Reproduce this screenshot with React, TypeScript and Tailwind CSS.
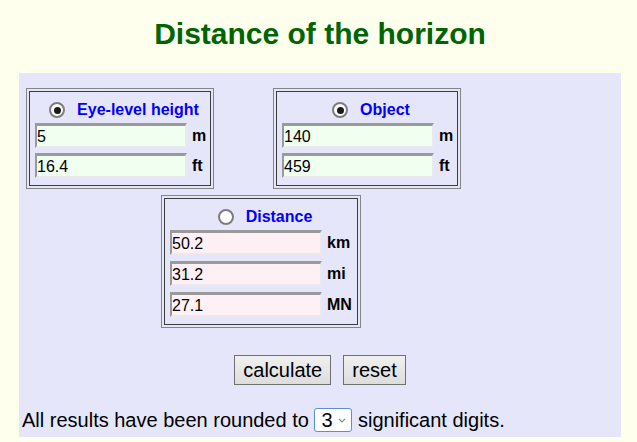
import React from "react";

const font = { fontFamily: '"Liberation Sans", Arial, sans-serif' };

function Radio({ checked }: { checked: boolean }) {
  return (
    <span className="ml-[8px] inline-flex h-[16px] w-[16px] shrink-0 items-center justify-center rounded-full border-2 border-[#7d7d7d] bg-white">
      {checked ? <span className="h-[7px] w-[7px] rounded-full bg-[#1a1a1a]" /> : null}
    </span>
  );
}

function Field({ value, unit, bg }: { value: string; unit: string; bg: string }) {
  return (
    <div className="flex items-center gap-[5px]">
      <input
        readOnly
        value={value}
        className={`h-[25px] w-[152px] border-t-[3px] border-l-[2px] border-r-[2px] border-b-[2px] border-t-[#9a9a9a] border-l-[#9a9a9a] border-r-[#e9e9ee] border-b-[#e9e9ee] pl-[0px] pt-[1px] text-[16px] leading-[18px] text-black outline-none ${bg}`}
        style={font}
      />
      <span className="text-[16px] font-bold text-black">{unit}</span>
    </div>
  );
}

function Box({
  width,
  label,
  checked,
  gap,
  fields,
  bg,
}: {
  width: string;
  label: string;
  checked: boolean;
  gap: string;
  fields: [string, string][];
  bg: string;
}) {
  return (
    <div className={`${width} border border-[#858585] p-[2px]`}>
      <div className={`flex flex-col border border-[#3c3c3c] px-[5px] pt-[5px] pb-[7px]`}>
        <div className="flex h-[26px] items-center justify-center gap-[12px]">
          <Radio checked={checked} />
          <span className="text-[16px] font-bold text-[#0000ff]">{label}</span>
        </div>
        <div className={`flex flex-col ${gap}`}>
          {fields.map(([v, u]) => (
            <Field key={u} value={v} unit={u} bg={bg} />
          ))}
        </div>
      </div>
    </div>
  );
}

export default function App() {
  return (
    <div className="min-h-[442px] w-[637px] bg-[#ffffee] pt-[17px]" style={font}>
      <h1 className="ml-[19px] w-[602px] text-center text-[30px] font-bold leading-[34px] text-[#006400]">
        Distance of the horizon
      </h1>
      <div className="ml-[19px] mt-[22px] w-[602px] bg-[#e6e6fa] pt-[15px] pb-[5px]">
        <div className="flex gap-[59px] pl-[7px]">
          <Box
            width="w-[188px]"
            label="Eye-level height"
            checked
            gap="gap-[5px]"
            bg="bg-[#f0fff0]"
            fields={[
              ["5", "m"],
              ["16.4", "ft"],
            ]}
          />
          <Box
            width="w-[188px]"
            label="Object"
            checked
            gap="gap-[5px]"
            bg="bg-[#f0fff0]"
            fields={[
              ["140", "m"],
              ["459", "ft"],
            ]}
          />
        </div>
        <div className="mt-[6px] pl-[142px]">
          <Box
            width="w-[200px]"
            label="Distance"
            checked={false}
            gap="gap-[6px]"
            bg="bg-[#fff0f5]"
            fields={[
              ["50.2", "km"],
              ["31.2", "mi"],
              ["27.1", "MN"],
            ]}
          />
        </div>
        <div className="mt-[27px] flex justify-center gap-[12px]">
          <button className="h-[30px] border border-[#707070] bg-gradient-to-b from-[#f0f0f0] to-[#dddddd] px-[8px] text-[20px] leading-[23px] text-black">
            calculate
          </button>
          <button className="h-[30px] border border-[#707070] bg-gradient-to-b from-[#f0f0f0] to-[#dddddd] px-[8px] text-[20px] leading-[23px] text-black">
            reset
          </button>
        </div>
        <div className="mt-[23px] flex items-center pl-[3px] text-[20px] leading-[23px] text-black">
          <span className="whitespace-pre">All results have been rounded to </span>
          <span className="inline-flex h-[24px] w-[38px] items-center justify-between rounded-[3px] border border-[#5b8ed6] bg-white pl-[6px] pr-[5px]">
            <span className="text-[20px] leading-[22px]">3</span>
            <svg width="8" height="5" viewBox="0 0 8 5" className="mt-[1px]">
              <path d="M1 1 L4 4 L7 1" stroke="#8a8a8a" strokeWidth="1.2" fill="none" />
            </svg>
          </span>
          <span className="whitespace-pre"> significant digits.</span>
        </div>
      </div>
    </div>
  );
}
